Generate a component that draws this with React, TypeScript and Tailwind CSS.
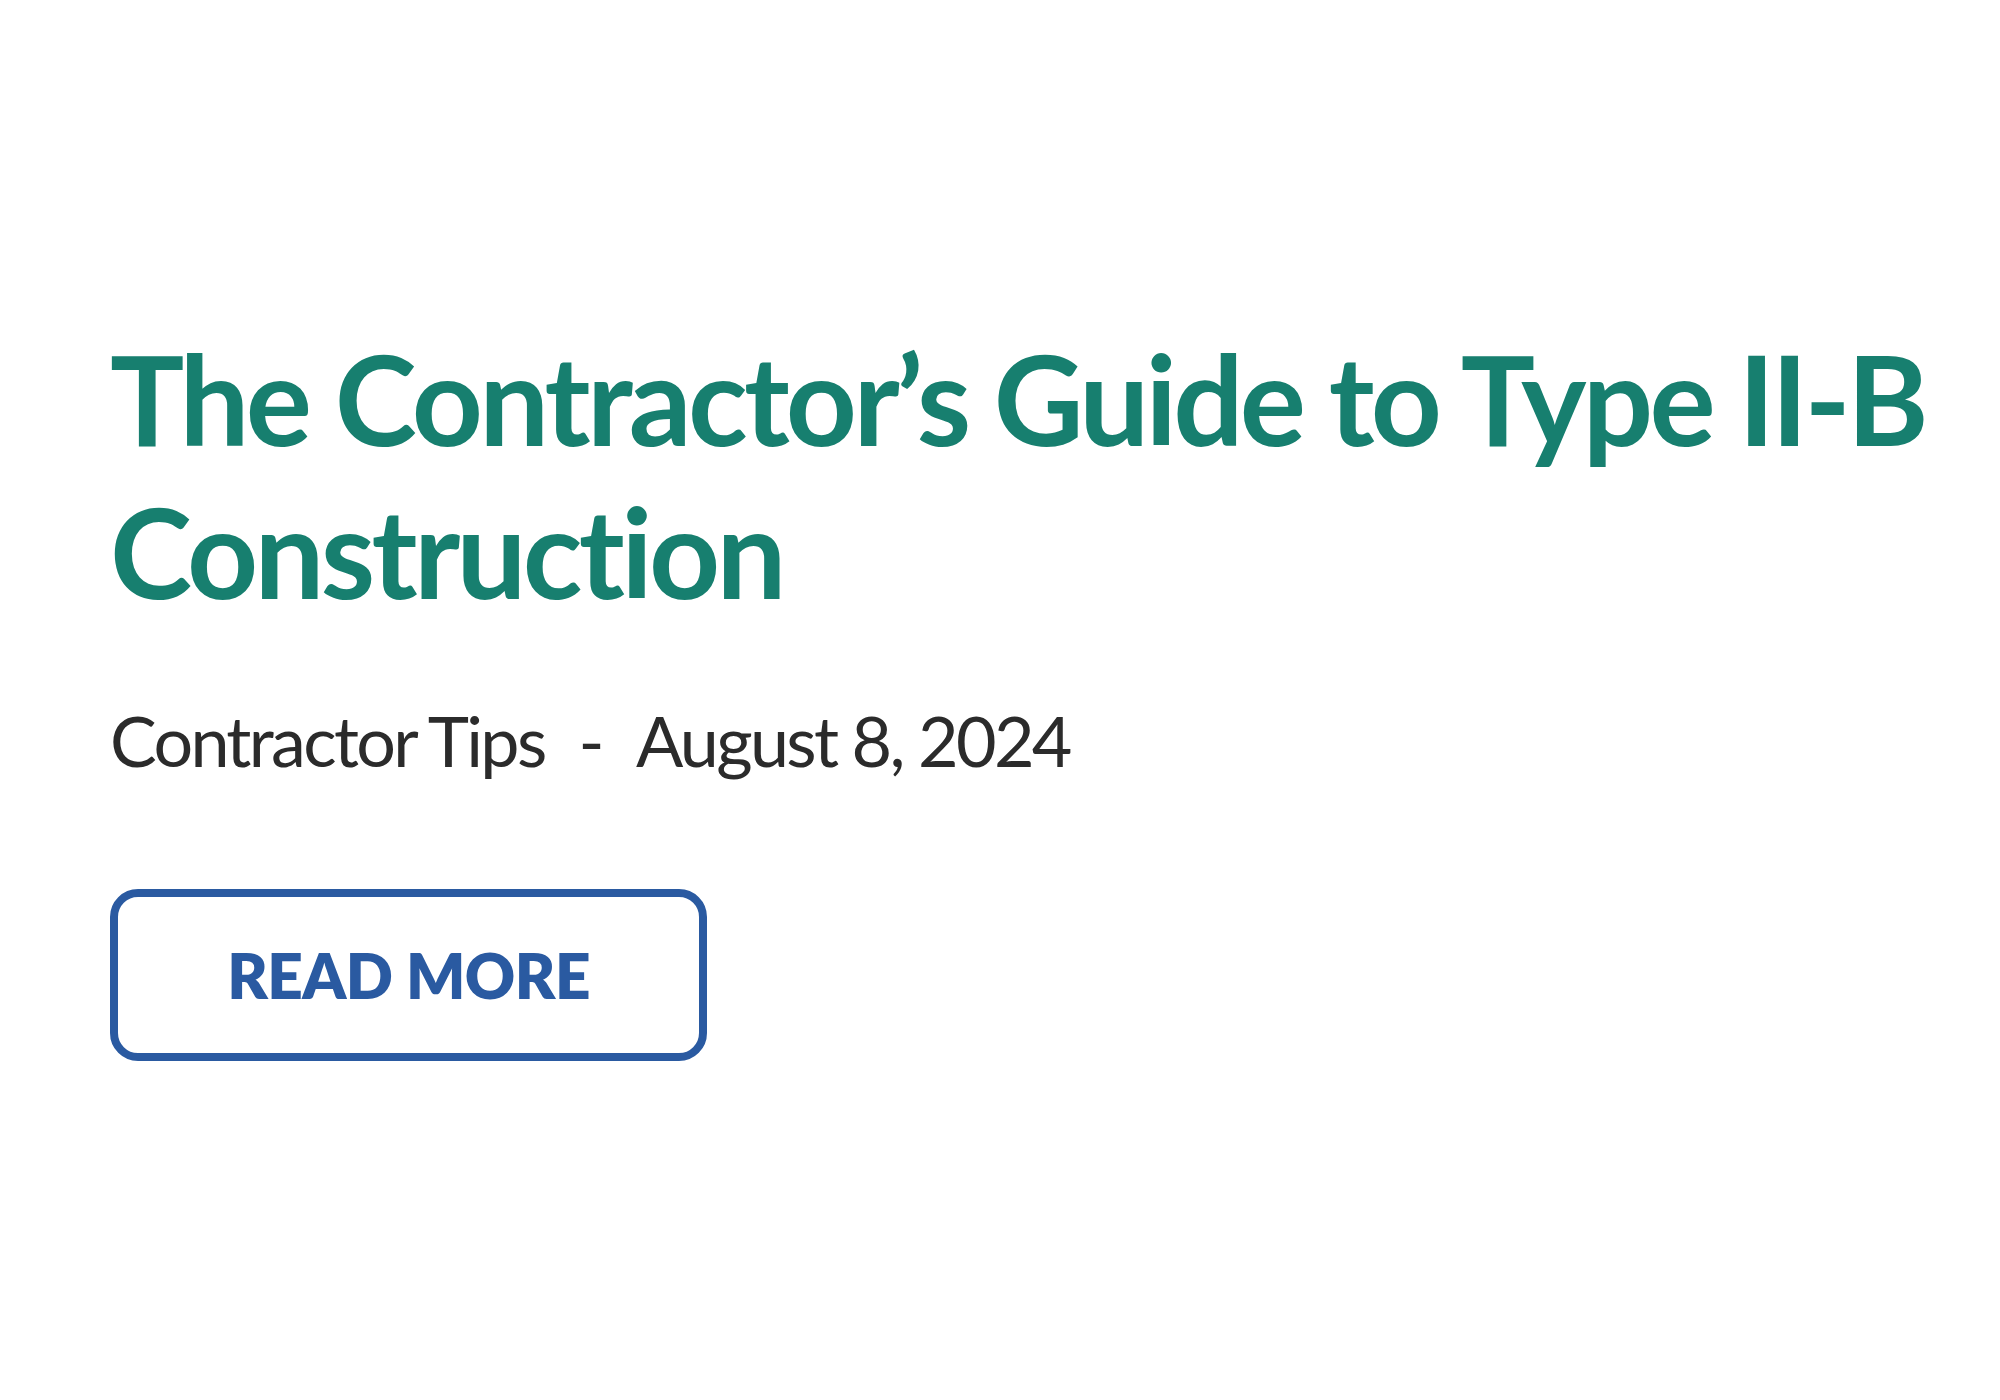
import React from 'react';

// Blog post teaser: title, category + date line, outlined call-to-action
const PostTeaser: React.FC<{ title: string; tag: string; category: string; date: string }> = ({
  title,
  tag,
  category,
  date,
}) => {
  return (
    <article className="flex flex-col items-start">
      <h2 className="text-[124px] leading-[153px] font-bold text-[#177f6f] tracking-[-0.03em] max-w-[1860px]">
        {title} <span className="whitespace-nowrap">{tag}</span> Construction
      </h2>
      <p className="mt-[70px] text-[70px] leading-[84px] text-[#2b2b2b] font-normal tracking-[-0.038em]">
        {category}
        <span className="mx-[34px]">-</span>
        {date}
      </p>
      <a
        href="#"
        className="mt-[107px] w-[597px] h-[172px] flex items-center justify-center rounded-[28px] border-[8px] border-[#2a5aa1] text-[#2a5aa1] text-[62px] font-extrabold tracking-[-0.01em]"
      >
        READ MORE
      </a>
    </article>
  );
};

export default function App() {
  return (
    <div
      className="min-h-[1400px] w-[2000px] bg-white pl-[110px] pt-[322px]"
      style={{ fontFamily: 'Lato, "Open Sans", sans-serif' }}
    >
      <PostTeaser
        title="The Contractor’s Guide to Type"
        tag="II-B"
        category="Contractor Tips"
        date="August 8, 2024"
      />
    </div>
  );
}
